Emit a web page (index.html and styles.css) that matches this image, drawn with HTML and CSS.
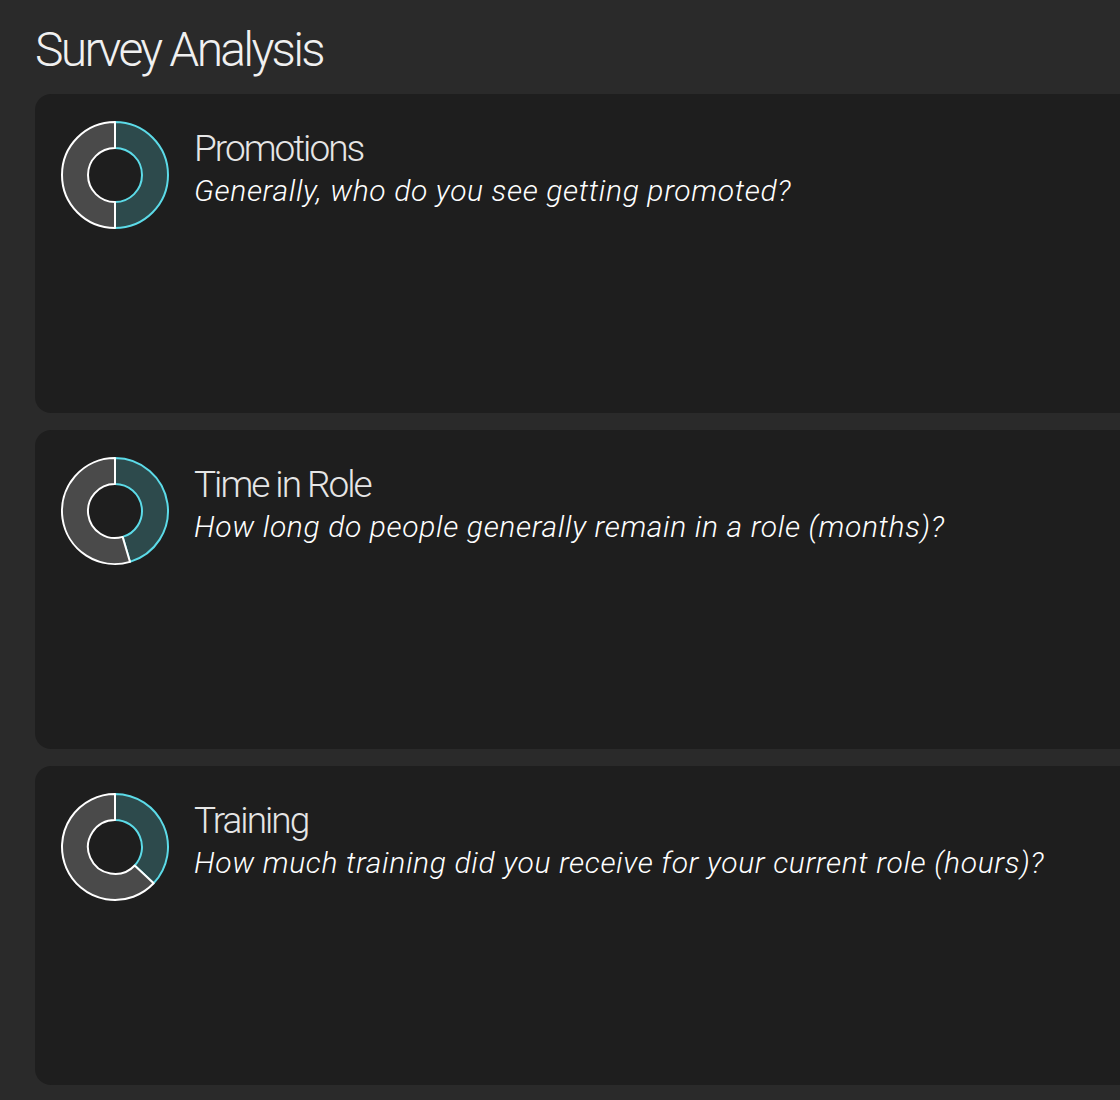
FILE: index.html
```html
<!DOCTYPE html>
<html>
<head>
<meta charset="utf-8">
<link rel="stylesheet" href="styles.css">
</head>
<body>
<div class="page">
  <h1 class="page-title">Survey Analysis</h1>
  <div class="cards">
    <section class="card">
      <svg class="donut" width="110" height="110" viewBox="0 0 110 110">
        <path class="seg-on" d="M55,2 A53,53 0 0 1 55,108 L55,82 A27,27 0 0 0 55,28 Z"/>
        <path class="seg-off" d="M55,108 A53,53 0 0 1 55,2 L55,28 A27,27 0 0 0 55,82 Z"/>
      </svg>
      <div class="card-text">
        <h2 class="card-title">Promotions</h2>
        <p class="card-question">Generally, who do you see getting promoted?</p>
      </div>
    </section>
    <section class="card">
      <svg class="donut" width="110" height="110" viewBox="0 0 110 110">
        <path class="seg-on" d="M55,2 A53,53 0 0 1 69.96,105.84 L62.62,80.90 A27,27 0 0 0 55,28 Z"/>
        <path class="seg-off" d="M69.96,105.84 A53,53 0 1 1 55,2 L55,28 A27,27 0 1 0 62.62,80.90 Z"/>
      </svg>
      <div class="card-text">
        <h2 class="card-title">Time in Role</h2>
        <p class="card-question">How long do people generally remain in a role (months)?</p>
      </div>
    </section>
    <section class="card">
      <svg class="donut" width="110" height="110" viewBox="0 0 110 110">
        <path class="seg-on" d="M55,2 A53,53 0 0 1 93.64,91.28 L74.68,73.48 A27,27 0 0 0 55,28 Z"/>
        <path class="seg-off" d="M93.64,91.28 A53,53 0 1 1 55,2 L55,28 A27,27 0 1 0 74.68,73.48 Z"/>
      </svg>
      <div class="card-text">
        <h2 class="card-title">Training</h2>
        <p class="card-question">How much training did you receive for your current role (hours)?</p>
      </div>
    </section>
  </div>
</div>
</body>
</html>
```
FILE: styles.css
```css
html, body {
  margin: 0;
  padding: 0;
  background: #2a2a2a;
  overflow: hidden;
}
body {
  font-family: Roboto, "Liberation Sans", sans-serif;
  font-weight: 300;
  color: #f2f2f2;
}
.page {
  padding: 20px 0 0 35px;
  width: 1200px;
}
.page-title {
  margin: 0;
  font-size: 48px;
  font-weight: 300;
  line-height: 60px;
  color: #f0f0f0;
  letter-spacing: -2.7px;
}
.cards {
  margin-top: 14px;
  display: flex;
  flex-direction: column;
  gap: 17px;
}
.card {
  background: #1e1e1e;
  border-radius: 16px;
  height: 319px;
  box-sizing: border-box;
  padding: 26px 0 0 25px;
  display: flex;
  align-items: flex-start;
  gap: 24px;
}
.donut {
  flex: none;
  display: block;
}
.seg-on {
  fill: #2d4a4c;
  stroke: #5cdbe8;
  stroke-width: 2;
  stroke-linejoin: round;
}
.seg-off {
  fill: #4a4a4a;
  stroke: #ffffff;
  stroke-width: 2;
  stroke-linejoin: round;
}
.card-text {
  padding-top: 8px;
}
.card-title {
  margin: 0;
  font-size: 37px;
  font-weight: 300;
  line-height: 42px;
  color: #e6e6e6;
  letter-spacing: -2px;
}
.card-question {
  margin: 0;
  font-size: 30px;
  font-style: italic;
  font-weight: 300;
  line-height: 42px;
  color: #ffffff;
  letter-spacing: 0.65px;
}
```
